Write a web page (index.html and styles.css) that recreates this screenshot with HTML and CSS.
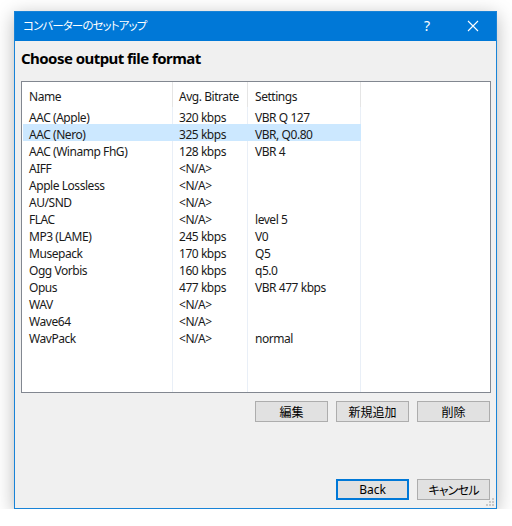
FILE: index.html
```html
<!DOCTYPE html>
<html lang="ja">
<head>
<meta charset="utf-8">
<title>コンバーターのセットアップ</title>
<link rel="stylesheet" href="styles.css">
</head>
<body>
<div class="window">
  <div class="titlebar">
    <span class="title">コンバーターのセットアップ</span>
    <span class="tb-btn help">?</span>
    <span class="tb-btn close">
      <svg width="12" height="12" viewBox="0 0 12 12"><path d="M1 1 L11 11 M11 1 L1 11" stroke="#fff" stroke-width="1.1" fill="none"/></svg>
    </span>
  </div>
  <div class="content">
    <h1 class="heading">Choose output file format</h1>
    <div class="list">
      <div class="row head">
        <div class="cell">Name</div><div class="cell">Avg. Bitrate</div><div class="cell">Settings</div><div class="cell"></div>
      </div>
      <div class="row"><div class="cell">AAC (Apple)</div><div class="cell">320 kbps</div><div class="cell">VBR Q 127</div><div class="cell"></div></div>
      <div class="row selected"><div class="cell">AAC (Nero)</div><div class="cell">325 kbps</div><div class="cell">VBR, Q0.80</div><div class="cell"></div></div>
      <div class="row"><div class="cell">AAC (Winamp FhG)</div><div class="cell">128 kbps</div><div class="cell">VBR 4</div><div class="cell"></div></div>
      <div class="row"><div class="cell">AIFF</div><div class="cell">&lt;N/A&gt;</div><div class="cell"></div><div class="cell"></div></div>
      <div class="row"><div class="cell">Apple Lossless</div><div class="cell">&lt;N/A&gt;</div><div class="cell"></div><div class="cell"></div></div>
      <div class="row"><div class="cell">AU/SND</div><div class="cell">&lt;N/A&gt;</div><div class="cell"></div><div class="cell"></div></div>
      <div class="row"><div class="cell">FLAC</div><div class="cell">&lt;N/A&gt;</div><div class="cell">level 5</div><div class="cell"></div></div>
      <div class="row"><div class="cell">MP3 (LAME)</div><div class="cell">245 kbps</div><div class="cell">V0</div><div class="cell"></div></div>
      <div class="row"><div class="cell">Musepack</div><div class="cell">170 kbps</div><div class="cell">Q5</div><div class="cell"></div></div>
      <div class="row"><div class="cell">Ogg Vorbis</div><div class="cell">160 kbps</div><div class="cell">q5.0</div><div class="cell"></div></div>
      <div class="row"><div class="cell">Opus</div><div class="cell">477 kbps</div><div class="cell">VBR 477 kbps</div><div class="cell"></div></div>
      <div class="row"><div class="cell">WAV</div><div class="cell">&lt;N/A&gt;</div><div class="cell"></div><div class="cell"></div></div>
      <div class="row"><div class="cell">Wave64</div><div class="cell">&lt;N/A&gt;</div><div class="cell"></div><div class="cell"></div></div>
      <div class="row"><div class="cell">WavPack</div><div class="cell">&lt;N/A&gt;</div><div class="cell">normal</div><div class="cell"></div></div>
      <div class="row filler"><div class="cell"></div><div class="cell"></div><div class="cell"></div><div class="cell"></div></div>
    </div>
    <div class="btn-row">
      <button class="btn jp">編集</button>
      <button class="btn jp">新規追加</button>
      <button class="btn jp">削除</button>
    </div>
    <div class="btn-row bottom">
      <button class="btn default">Back</button>
      <button class="btn jp kana">キャンセル</button>
    </div>
  </div>
  <svg class="grip" width="10" height="10" viewBox="0 0 10 10">
    <rect x="7" y="1" width="2" height="2" fill="#c8c8c8"/>
    <rect x="4" y="4" width="2" height="2" fill="#c8c8c8"/>
    <rect x="7" y="4" width="2" height="2" fill="#c8c8c8"/>
    <rect x="1" y="7" width="2" height="2" fill="#c8c8c8"/>
    <rect x="4" y="7" width="2" height="2" fill="#c8c8c8"/>
    <rect x="7" y="7" width="2" height="2" fill="#c8c8c8"/>
  </svg>
</div>
</body>
</html>
```

FILE: styles.css
```css
* { box-sizing: border-box; }
html, body { margin: 0; padding: 0; background: #ffffff; }
body {
  font-family: "Segoe UI", "Noto Sans", "Noto Sans CJK JP", sans-serif;
  font-size: 12px;
  color: #000;
}
.window {
  position: relative;
  margin: 11px 0 0 14px;
  width: 483px;
  height: 498px;
  border: 1px solid #1883d7;
  background: #f0f0f0;
  box-shadow: 0 4px 18px rgba(0, 0, 0, 0.28);
  display: flex;
  flex-direction: column;
}
.titlebar {
  height: 29px;
  background: #0078d7;
  color: #fff;
  display: flex;
  align-items: center;
}
.title {
  flex: 1;
  padding-left: 8px;
  padding-bottom: 3px;
  font-family: "Noto Sans CJK JP", sans-serif;
  font-feature-settings: "palt";
  font-size: 11.5px;
  letter-spacing: -0.9px;
}
.tb-btn {
  width: 46px;
  height: 29px;
  display: flex;
  align-items: center;
  justify-content: center;
  padding-bottom: 2px;
}
.help {
  font-family: "Noto Sans", sans-serif;
  font-size: 14px;
}
.content {
  flex: 1;
  display: flex;
  flex-direction: column;
  padding: 0 5px 0 6px;
}
.heading {
  margin: 0;
  height: 40px;
  padding-top: 7px;
  font-size: 15px;
  letter-spacing: -0.55px;
  line-height: 20px;
  font-weight: bold;
  color: #000;
}
.list {
  height: 312px;
  border: 1px solid #828790;
  background: #fff;
  display: flex;
  flex-direction: column;
  letter-spacing: -0.45px;
}
.row {
  display: grid;
  grid-template-columns: 151px 75px 113px 1fr;
  height: 17px;
}
.row.head { height: 25px; }
.row.filler { flex: 1; }
.cell {
  padding: 4px 0 0 7px;
  line-height: 13px;
  white-space: nowrap;
  color: #1a1a1a;
}
.head .cell { padding-top: 6px; line-height: 17px; }
.cell:nth-child(-n+3) { border-right: 1px solid #e9eff7; }
.head .cell:nth-child(-n+3) { border-right-color: #e5e5e5; }
.cell:nth-child(2) { padding-left: 6px; }
.selected .cell:nth-child(-n+3) { background: #cce8ff; border-right-color: #cce8ff; }
.selected .cell:first-child { margin-left: 1px; padding-left: 6px; }
.btn-row {
  display: flex;
  justify-content: flex-end;
  gap: 8px;
  margin-top: 8px;
  padding-right: 1px;
}
.btn-row.bottom { margin-top: 57px; }
.btn {
  width: 73px;
  height: 21px;
  padding: 0;
  margin: 0;
  background: #e1e1e1;
  border: 1px solid #adadad;
  font-family: "Segoe UI", "Noto Sans", "Noto Sans CJK JP", sans-serif;
  font-size: 12px;
  color: #000;
  line-height: 19px;
}
.btn.jp {
  font-family: "Noto Sans CJK JP", sans-serif;
  font-feature-settings: "palt";
}
.btn.kana { letter-spacing: -0.8px; }
.btn.default { border: 2px solid #0078d7; line-height: 17px; }
.grip {
  position: absolute;
  right: 1px;
  bottom: 1px;
}
```
